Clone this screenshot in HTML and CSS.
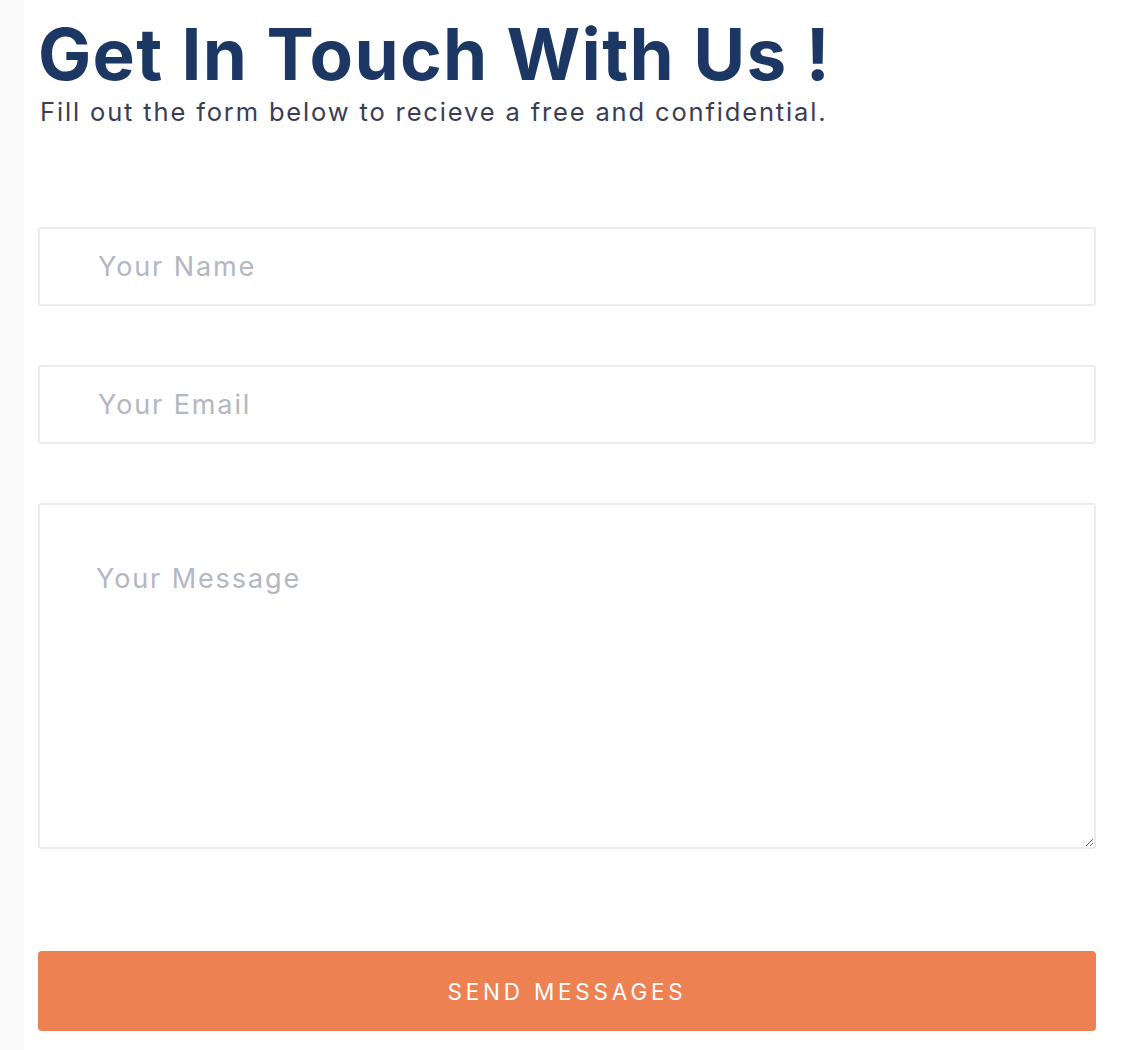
FILE: index.html
```html
<!DOCTYPE html>
<html lang="en">
<head>
<meta charset="utf-8">
<title>Get In Touch</title>
<link rel="stylesheet" href="styles.css">
</head>
<body>
<div class="page">
  <section class="contact">
    <h1 class="title">Get In Touch With Us !</h1>
    <p class="subtitle">Fill out the form below to recieve a free and confidential.</p>
    <form class="form">
      <input class="field" type="text" placeholder="Your Name">
      <input class="field" type="email" placeholder="Your Email">
      <textarea class="field message" placeholder="Your Message"></textarea>
      <button class="send" type="button">SEND MESSAGES</button>
    </form>
  </section>
</div>
</body>
</html>
```
FILE: styles.css
```css
html, body {
  margin: 0;
  padding: 0;
  background: #ffffff;
}
.page {
  min-height: 1050px;
  border-left: 24px solid #fafafa;
  box-sizing: border-box;
  font-family: Inter, "Liberation Sans", sans-serif;
}
.contact {
  width: 1058px;
  margin-left: 14px;
  padding-top: 14px;
}
.title {
  margin: 0;
  font-size: 71px;
  font-weight: 700;
  line-height: 80px;
  color: #1c3763;
  letter-spacing: 1.3px;
}
.subtitle {
  margin: 3px 0 0 2px;
  font-size: 25.5px;
  line-height: 30px;
  color: #3b3d54;
  letter-spacing: 1.85px;
}
.form {
  display: flex;
  flex-direction: column;
  margin-top: 100px;
}
.field {
  box-sizing: border-box;
  width: 100%;
  height: 79px;
  margin: 0 0 59px 0;
  padding: 0 0 0 58px;
  border: 2px solid #ececec;
  border-radius: 3px;
  background: #ffffff;
  font-family: inherit;
  font-size: 27px;
  color: #333;
  outline: none;
}
.field::placeholder {
  color: #b3b6c3;
  letter-spacing: 1.9px;
}
.message {
  height: 346px;
  margin-bottom: 102px;
  padding: 57px 0 0 56px;
  resize: both;
}
.send {
  height: 80px;
  width: 100%;
  border: none;
  border-radius: 4px;
  background: #ee8152;
  color: #ffffff;
  font-family: inherit;
  font-size: 22.5px;
  letter-spacing: 3.8px;
  cursor: pointer;
}
```
